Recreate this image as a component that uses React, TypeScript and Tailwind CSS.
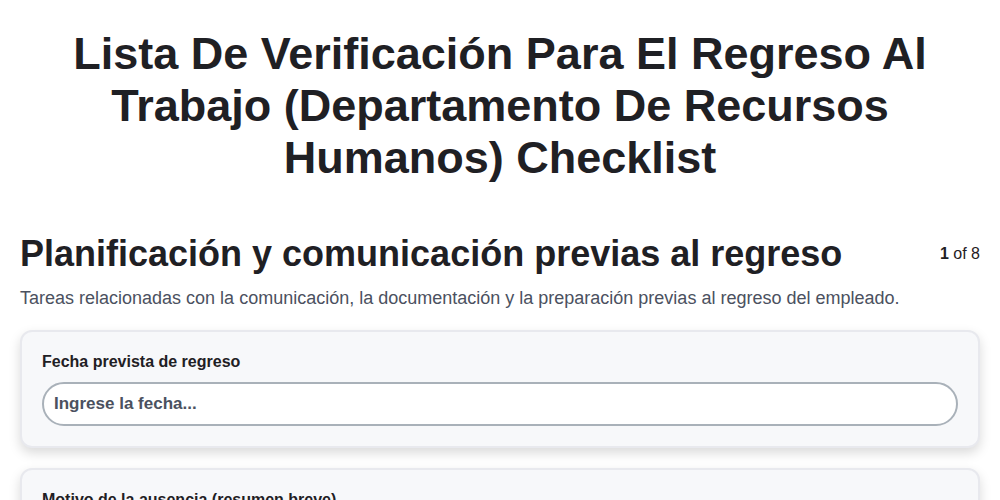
const fields = [
  { label: 'Fecha prevista de regreso', placeholder: 'Ingrese la fecha...' },
  { label: 'Motivo de la ausencia (resumen breve)', placeholder: 'Ingrese el motivo...' },
];

const App = () => {
  return (
    <div className="min-h-screen bg-white px-5 pb-10 font-['Liberation_Sans',Arial,sans-serif] text-[#1f2024]">
      <h1 className="mx-auto max-w-[900px] pt-[28px] text-center text-[45px] font-bold leading-[52px]">
        Lista De Verificación Para El Regreso Al Trabajo (Departamento De Recursos Humanos) Checklist
      </h1>

      <div className="mt-[48px] flex items-start justify-between">
        <h2 className="text-[36px] font-bold leading-[44px]">
          Planificación y comunicación previas al regreso
        </h2>
        <div className="pt-[10px] text-[16px]">
          <span className="font-bold">1</span> of <span>8</span>
        </div>
      </div>
      <p className="mt-[8px] text-[18px] leading-[28px] text-[#4b5160]">
        Tareas relacionadas con la comunicación, la documentación y la preparación previas al regreso del empleado.
      </p>

      <div className="mt-[18px] flex flex-col gap-[20px]">
        {fields.map((field, index) => (
          <div
            key={'field-' + index}
            className="rounded-xl border-2 border-[#e8e9ee] bg-[#f7f8fa] px-5 pt-[18px] pb-[20px] shadow-[0_5px_12px_rgba(0,0,0,0.15)]"
          >
            <label className="block text-[16px] leading-[24px] font-bold text-[#1f2024]">{field.label}</label>
            <input
              className="mt-[8px] h-[44px] w-full rounded-[22px] border-2 border-[#a9b1b9] bg-white px-[10px] text-[17px] font-bold text-[#4b5160] placeholder:text-[#4b5160] outline-none"
              placeholder={field.placeholder}
            />
          </div>
        ))}
      </div>
    </div>
  );
};

export default App;
